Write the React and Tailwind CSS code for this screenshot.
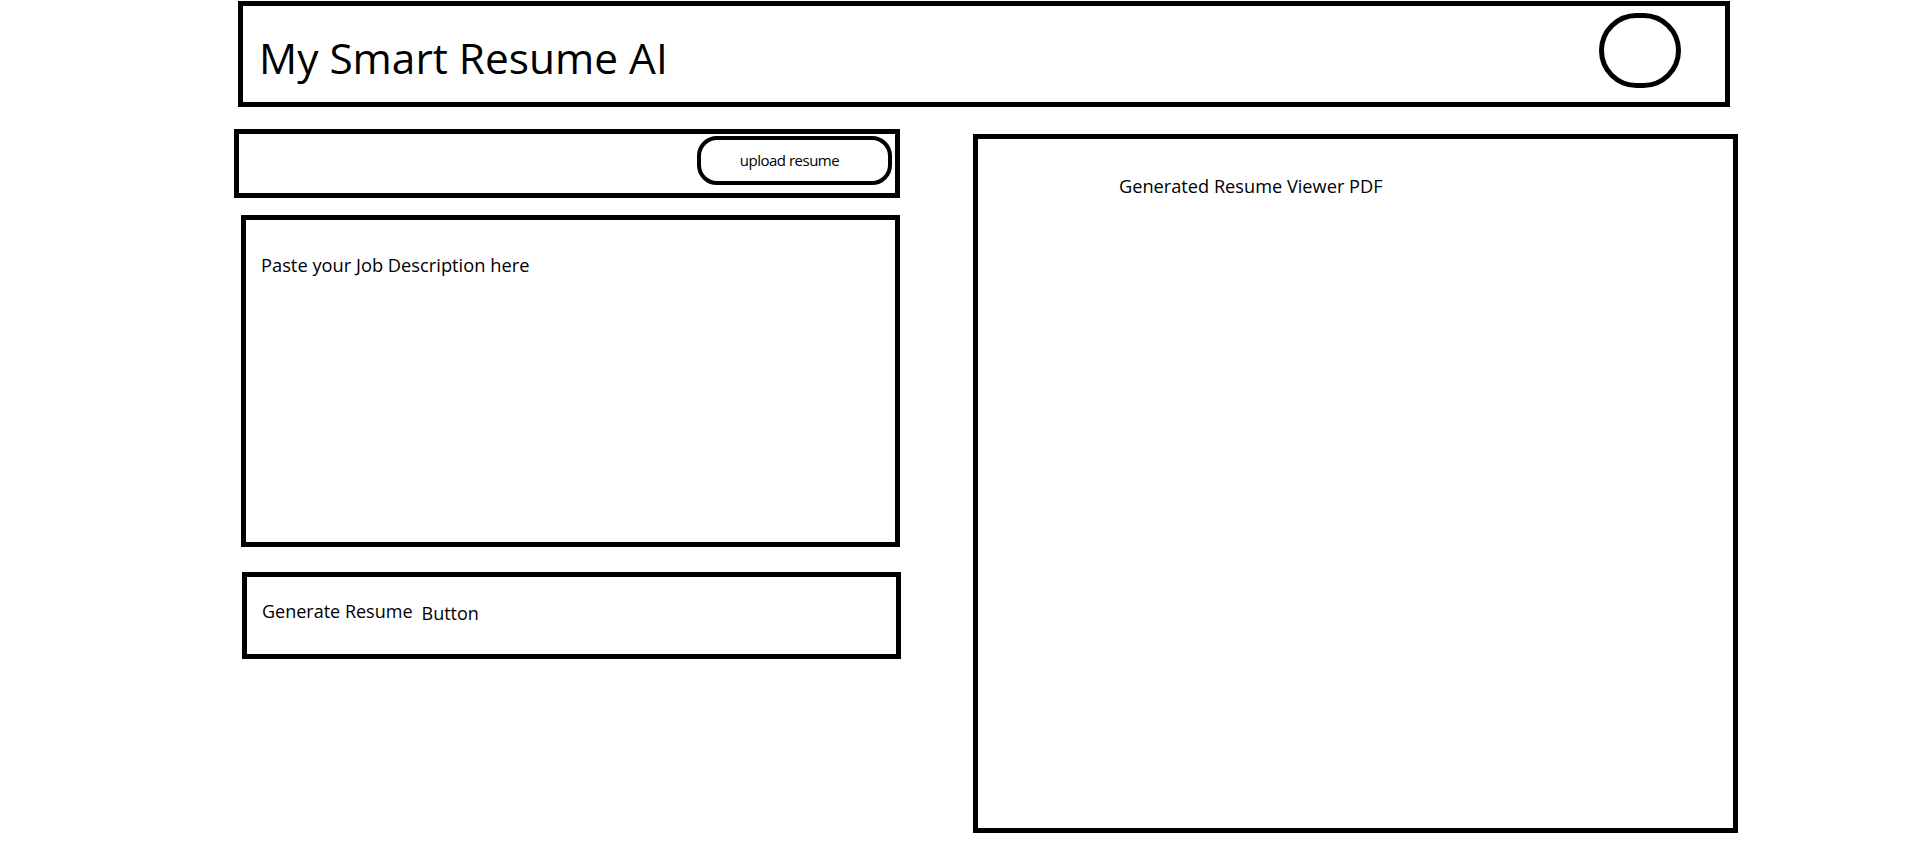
export default function App() {
  const font = { fontFamily: '"Open Sans", "Noto Sans", sans-serif' };
  return (
    <div className="w-[1914px] h-[863px] bg-white text-black pt-[1px]" style={font}>
      <header className="ml-[238px] w-[1492px] h-[106px] border-[5px] border-black flex items-start justify-between">
        <h1 className="ml-[16px] mt-[31px] text-[42.4px] leading-none font-normal">My Smart Resume AI</h1>
        <div className="mt-[7px] mr-[44px] w-[82px] h-[75px] rounded-full border-[5px] border-black" />
      </header>

      <div className="flex items-start mt-[22px]">
        <div className="ml-[234px] w-[666px] flex flex-col">
          <div className="w-[666px] h-[69px] border-[5px] border-black flex items-start justify-end">
            <button className="mt-[2px] mr-[3px] w-[195px] h-[49px] rounded-[20px] border-[4px] border-black flex items-center justify-center pr-[10px] text-[15px] tracking-[-0.5px] leading-none">
              upload resume
            </button>
          </div>
          <div className="ml-[7px] mt-[17px] w-[659px] h-[332px] border-[5px] border-black pl-[15px] pt-[36px]">
            <p className="text-[18.3px] leading-none">Paste your Job Description here</p>
          </div>
          <div className="ml-[8px] mt-[25px] w-[659px] h-[87px] border-[5px] border-black pl-[15px] pt-[25px] flex items-start">
            <span className="text-[18px] leading-none">Generate Resume</span>
            <span className="ml-[9px] mt-[2px] text-[18px] leading-none">Button</span>
          </div>
        </div>

        <div className="ml-[73px] mt-[5px] w-[765px] h-[699px] border-[5px] border-black pl-[141px] pt-[38px]">
          <p className="text-[18.2px] leading-none">Generated Resume Viewer PDF</p>
        </div>
      </div>
    </div>
  );
}
